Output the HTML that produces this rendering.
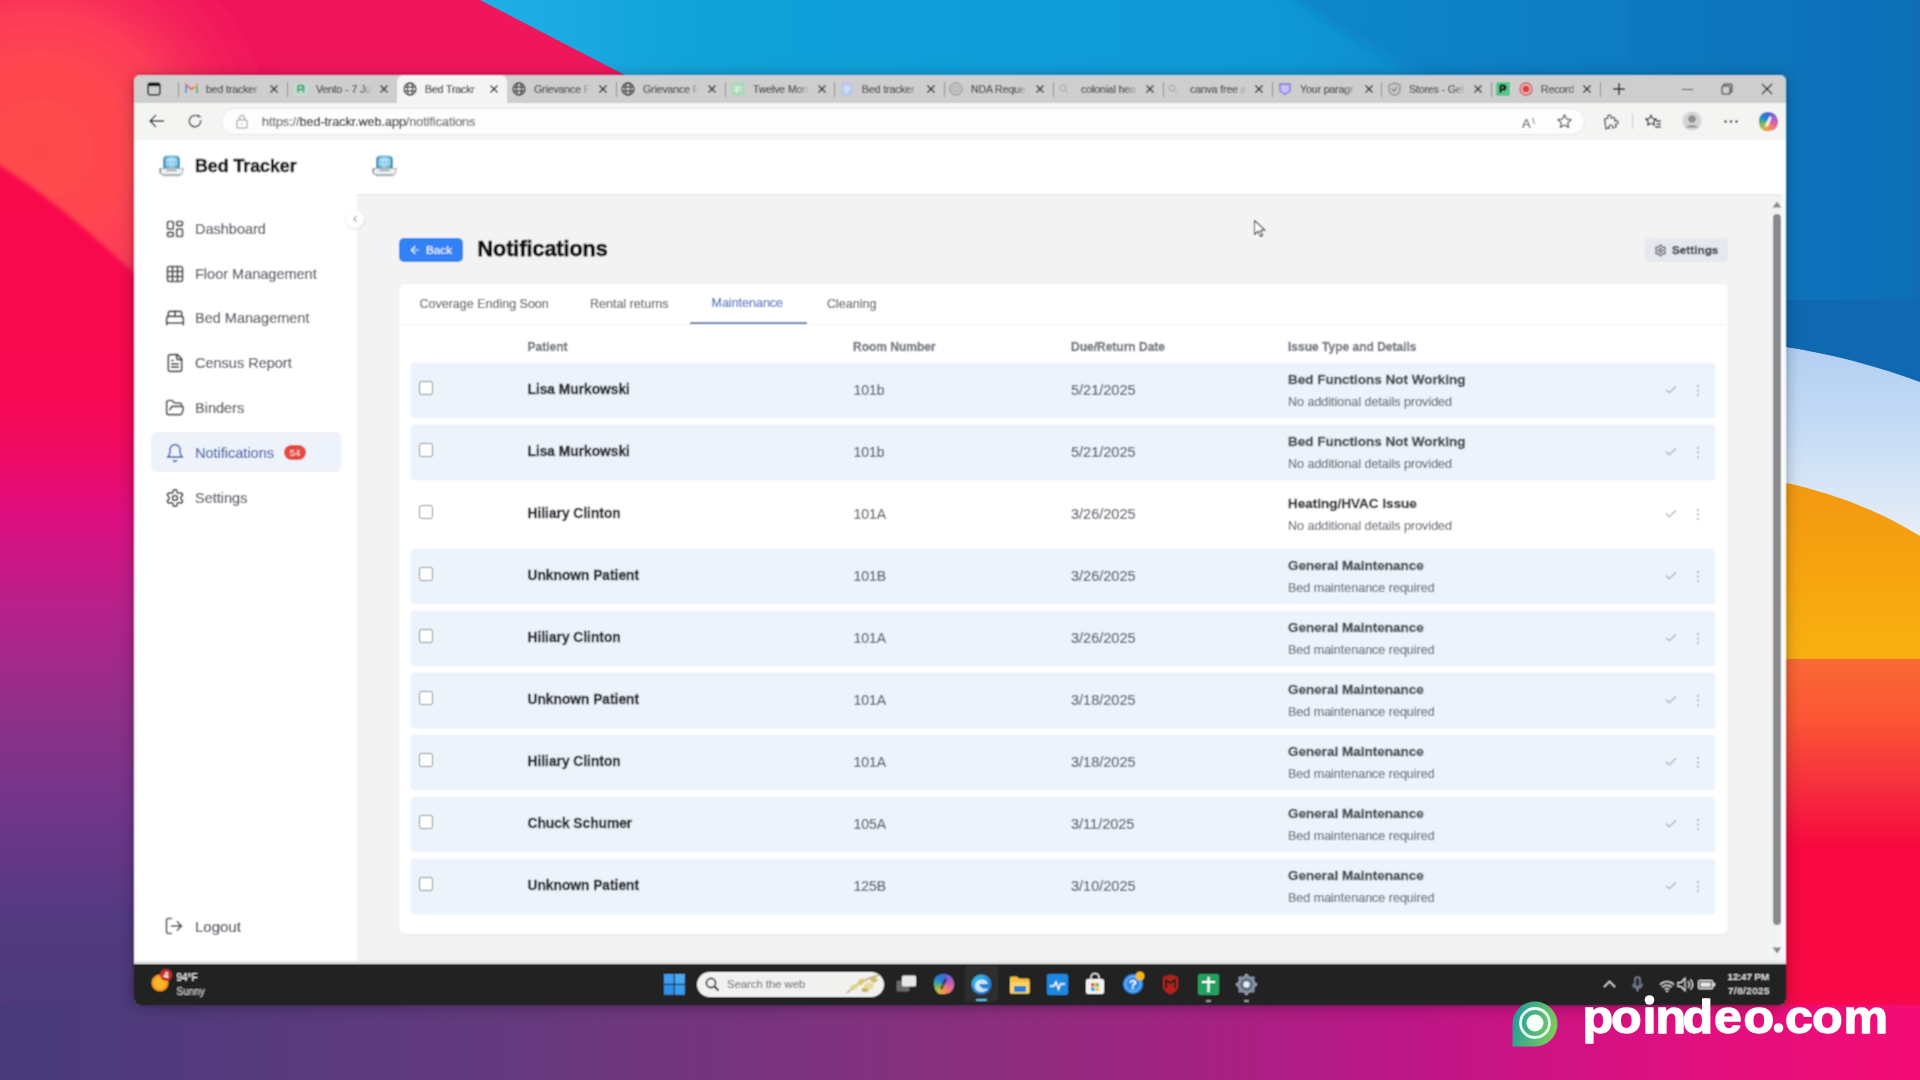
<!DOCTYPE html>
<html><head><meta charset="utf-8">
<style>
*{box-sizing:border-box;margin:0;padding:0}
html,body{width:1920px;height:1080px;overflow:hidden;font-family:"Liberation Sans",sans-serif;background:#6a3a88}
#win{position:absolute;left:134px;top:75px;width:1652px;height:930px;border-radius:6px;overflow:hidden;background:#f3f3f3;box-shadow:0 0 3px rgba(0,0,0,.3),0 2px 16px rgba(0,0,0,.3)}
svg{overflow:visible}
#win{filter:url(#softb)}
</style></head><body>
<svg width="0" height="0" style="position:absolute;left:0;top:0"><filter id="softb" x="-3%" y="-4%" width="106%" height="108%"><feConvolveMatrix order="3" kernelMatrix="1 2 1 2 4 2 1 2 1" divisor="16" edgeMode="none" preserveAlpha="false"/></filter></svg>
<svg id="wall" width="1920" height="1080" viewBox="0 0 1920 1080" style="position:absolute;left:0;top:0">
<defs>
 <linearGradient id="gl" x1="0" y1="0" x2="0" y2="1">
  <stop offset="0" stop-color="#f2185a"/>
  <stop offset="0.16" stop-color="#f80a4c"/>
  <stop offset="0.36" stop-color="#f80850"/>
  <stop offset="0.42" stop-color="#ee0a62"/>
  <stop offset="0.48" stop-color="#dc0e80"/>
  <stop offset="0.56" stop-color="#b8208a"/>
  <stop offset="0.66" stop-color="#8e3088"/>
  <stop offset="0.74" stop-color="#74358a"/>
  <stop offset="0.85" stop-color="#533a80"/>
  <stop offset="1" stop-color="#463a7a"/>
 </linearGradient>
 <linearGradient id="gtop" x1="0" y1="0" x2="1" y2="0">
  <stop offset="0" stop-color="#f4554c"/>
  <stop offset="0.3" stop-color="#f0305a"/>
  <stop offset="1" stop-color="#e0185a"/>
 </linearGradient>
 <linearGradient id="gb" x1="0" y1="0" x2="1" y2="0">
  <stop offset="0" stop-color="#473a7b"/>
  <stop offset="0.26" stop-color="#643a7e"/>
  <stop offset="0.52" stop-color="#8c2e7e"/>
  <stop offset="0.73" stop-color="#bc1686"/>
  <stop offset="0.86" stop-color="#dc1080"/>
  <stop offset="1" stop-color="#f40c74"/>
 </linearGradient>
 <linearGradient id="gblue" x1="0" y1="0" x2="1" y2="0">
  <stop offset="0" stop-color="#22aee6"/>
  <stop offset="0.15" stop-color="#10a2da"/>
  <stop offset="0.55" stop-color="#0e98d6"/>
  <stop offset="1" stop-color="#0f66ae"/>
 </linearGradient>
 <linearGradient id="gr" x1="0" y1="0" x2="0" y2="1">
  <stop offset="0" stop-color="#f86a34"/>
  <stop offset="0.14" stop-color="#fc5634"/>
  <stop offset="0.3" stop-color="#f6303c"/>
  <stop offset="0.45" stop-color="#f80840"/>
  <stop offset="0.78" stop-color="#f80844"/>
  <stop offset="1" stop-color="#f40c74"/>
 </linearGradient>
 <linearGradient id="gor" x1="0" y1="0" x2="0" y2="1">
  <stop offset="0" stop-color="#f09612"/>
  <stop offset="0.5" stop-color="#f7a30f"/>
  <stop offset="1" stop-color="#f8b010"/>
 </linearGradient>
 <linearGradient id="glight" x1="0" y1="0" x2="0" y2="1">
  <stop offset="0" stop-color="#a8c6ee"/>
  <stop offset="0.5" stop-color="#c2daf6"/>
  <stop offset="1" stop-color="#e6eef6"/>
 </linearGradient>
 <linearGradient id="gbv" x1="0" y1="0" x2="0" y2="1">
  <stop offset="0" stop-color="#f0106a" stop-opacity="0"/>
  <stop offset="1" stop-color="#f0106a" stop-opacity="1"/>
 </linearGradient>
 <filter id="bl3" x="-20%" y="-20%" width="140%" height="140%"><feGaussianBlur stdDeviation="5"/></filter>
 <filter id="bl2" x="-50%" y="-50%" width="200%" height="200%"><feGaussianBlur stdDeviation="10"/></filter>
 <filter id="bl" x="-5%" y="-5%" width="110%" height="110%"><feGaussianBlur stdDeviation="2"/></filter>
</defs>
<rect width="1920" height="1080" fill="url(#gl)"/>
<radialGradient id="gcor" gradientUnits="userSpaceOnUse" cx="40" cy="150" r="250">
  <stop offset="0" stop-color="#fe4a4c"/>
  <stop offset="0.35" stop-color="#fe4650"/>
  <stop offset="0.55" stop-color="#fd3c58"/>
  <stop offset="1" stop-color="#f2185a" stop-opacity="0"/>
</radialGradient>
<rect x="0" y="0" width="700" height="75" fill="#f0165c"/>
<path d="M-10 -10 L640 -10 L640 400 L134 273 C95 238 50 195 -10 160 Z" fill="url(#gcor)" filter="url(#bl)"/>
<path d="M560 -10 L640 -10 L640 80 L625 80 Z" fill="#d81550" opacity=".6" filter="url(#bl)"/>
<path d="M1700 658 L1920 658 L1920 1080 L1700 1080Z" fill="url(#gr)"/>
<path d="M0 1005 L1920 1005 L1920 1080 L0 1080Z" fill="url(#gb)"/>
<path d="M1700 466 C1800 474 1870 501 1920 532 L1920 659 L1700 659Z" fill="url(#gor)"/>
<path d="M1700 300 L1920 300 L1920 536 C1870 505 1800 478 1700 470Z" fill="url(#glight)"/>
<path d="M480 0 L1920 0 L1920 382 C1860 360 1780 340 1700 340 L1133 338 Z" fill="url(#gblue)"/>
<linearGradient id="gblue2" gradientUnits="userSpaceOnUse" x1="1270" y1="0" x2="1920" y2="0">
  <stop offset="0" stop-color="#0c88ca"/>
  <stop offset="0.5" stop-color="#0d7cc2"/>
  <stop offset="1" stop-color="#106eb6"/>
</linearGradient>
<path d="M1268 -20 C1320 20 1390 60 1460 100 L1460 338 L1920 338 L1920 -20 Z" fill="url(#gblue2)" filter="url(#bl3)"/>
<path d="M1700 300 L1930 300 L1930 382 C1860 360 1780 340 1700 340 Z" fill="#0f68b0"/>
</svg>
<div id="win">
<div style="position:absolute;left:0px;top:0px;width:1652px;height:28px;background:#cececf"></div>
<div style="position:absolute;left:263px;top:0px;width:110px;height:30px;background:#f4f4f4;border-radius:7px 7px 0 0"></div>
<svg style="position:absolute;left:13px;top:7px;" width="14" height="14" viewBox="0 0 14 14"><rect x="1.2" y="1.2" width="11.6" height="11.6" rx="1.5" fill="none" stroke="#111" stroke-width="1.5"/><rect x="1.2" y="1.2" width="11.6" height="3" fill="#111"/></svg>
<div style="position:absolute;left:44px;top:7px;width:1px;height:15px;background:#8a8a8a"></div>
<div style="position:absolute;left:153px;top:7px;width:1px;height:15px;background:#8a8a8a"></div>
<div style="position:absolute;left:482px;top:7px;width:1px;height:15px;background:#8a8a8a"></div>
<div style="position:absolute;left:591px;top:7px;width:1px;height:15px;background:#8a8a8a"></div>
<div style="position:absolute;left:700px;top:7px;width:1px;height:15px;background:#8a8a8a"></div>
<div style="position:absolute;left:810px;top:7px;width:1px;height:15px;background:#8a8a8a"></div>
<div style="position:absolute;left:919px;top:7px;width:1px;height:15px;background:#8a8a8a"></div>
<div style="position:absolute;left:1029px;top:7px;width:1px;height:15px;background:#8a8a8a"></div>
<div style="position:absolute;left:1138px;top:7px;width:1px;height:15px;background:#8a8a8a"></div>
<div style="position:absolute;left:1247px;top:7px;width:1px;height:15px;background:#8a8a8a"></div>
<div style="position:absolute;left:1357px;top:7px;width:1px;height:15px;background:#8a8a8a"></div>
<div style="position:absolute;left:1466px;top:7px;width:1px;height:15px;background:#8a8a8a"></div>
<svg style="position:absolute;left:51px;top:8px;opacity:.75" width="13" height="11" viewBox="0 0 13 11"><path d="M1 10V2l5.5 4.2L12 2v8" fill="none" stroke="#e0524a" stroke-width="2"/><path d="M1 10V3" stroke="#4a86e8" stroke-width="2"/><path d="M12 10V3" stroke="#3aa757" stroke-width="2"/><path d="M9 3.5 12 2" stroke="#f5bf26" stroke-width="2"/></svg>
<div style="position:absolute;left:72px;top:7.70px;height:12.60px;line-height:12.60px;font-size:10.5px;color:#474747;font-weight:400;white-space:nowrap;-webkit-text-stroke:0.2px #474747;letter-spacing:-0.1px;-webkit-mask-image:linear-gradient(90deg,#000 80%,transparent);mask-image:linear-gradient(90deg,#000 80%,transparent);width:56px;overflow:hidden">bed tracker</div>
<svg style="position:absolute;left:135px;top:9px;" width="10" height="10" viewBox="0 0 10 10"><path d="M1.5 1.5 L8.5 8.5 M8.5 1.5 L1.5 8.5" stroke="#2a2a2a" stroke-width="1.4" fill="none"/></svg>
<svg style="position:absolute;left:161px;top:8px;opacity:.8" width="13" height="12" viewBox="0 0 13 12"><rect x="0" y="0" width="13" height="12" rx="1" fill="#bfe3cf"/><path d="M3 2.5v7M3 2.5h3.5a2 2 0 0 1 0 4H3" fill="none" stroke="#2f9a63" stroke-width="1.8"/><path d="M8.5 2.5v7" stroke="#2f9a63" stroke-width="1.8"/></svg>
<div style="position:absolute;left:182px;top:7.70px;height:12.60px;line-height:12.60px;font-size:10.5px;color:#474747;font-weight:400;white-space:nowrap;-webkit-text-stroke:0.2px #474747;letter-spacing:-0.1px;-webkit-mask-image:linear-gradient(90deg,#000 80%,transparent);mask-image:linear-gradient(90deg,#000 80%,transparent);width:56px;overflow:hidden">Vento - 7 Ju</div>
<svg style="position:absolute;left:245px;top:9px;" width="10" height="10" viewBox="0 0 10 10"><path d="M1.5 1.5 L8.5 8.5 M8.5 1.5 L1.5 8.5" stroke="#2a2a2a" stroke-width="1.4" fill="none"/></svg>
<svg style="position:absolute;left:269px;top:7px;" width="14" height="14" viewBox="0 0 14 14"><g fill="none" stroke="#3a3a3a" stroke-width="1.3"><circle cx="7" cy="7" r="6"/><ellipse cx="7" cy="7" rx="2.6" ry="6"/><path d="M1 5.2h12M1 8.8h12"/></g></svg>
<div style="position:absolute;left:291px;top:7.70px;height:12.60px;line-height:12.60px;font-size:10.5px;color:#2e2e2e;font-weight:400;white-space:nowrap;-webkit-text-stroke:0.2px #2e2e2e;letter-spacing:-0.1px;-webkit-mask-image:linear-gradient(90deg,#000 80%,transparent);mask-image:linear-gradient(90deg,#000 80%,transparent);width:56px;overflow:hidden">Bed Trackr</div>
<svg style="position:absolute;left:355px;top:9px;" width="10" height="10" viewBox="0 0 10 10"><path d="M1.5 1.5 L8.5 8.5 M8.5 1.5 L1.5 8.5" stroke="#2a2a2a" stroke-width="1.4" fill="none"/></svg>
<svg style="position:absolute;left:378px;top:7px;" width="14" height="14" viewBox="0 0 14 14"><g fill="none" stroke="#3a3a3a" stroke-width="1.3"><circle cx="7" cy="7" r="6"/><ellipse cx="7" cy="7" rx="2.6" ry="6"/><path d="M1 5.2h12M1 8.8h12"/></g></svg>
<div style="position:absolute;left:400px;top:7.70px;height:12.60px;line-height:12.60px;font-size:10.5px;color:#474747;font-weight:400;white-space:nowrap;-webkit-text-stroke:0.2px #474747;letter-spacing:-0.1px;-webkit-mask-image:linear-gradient(90deg,#000 80%,transparent);mask-image:linear-gradient(90deg,#000 80%,transparent);width:56px;overflow:hidden">Grievance F</div>
<svg style="position:absolute;left:464px;top:9px;" width="10" height="10" viewBox="0 0 10 10"><path d="M1.5 1.5 L8.5 8.5 M8.5 1.5 L1.5 8.5" stroke="#2a2a2a" stroke-width="1.4" fill="none"/></svg>
<svg style="position:absolute;left:487px;top:7px;" width="14" height="14" viewBox="0 0 14 14"><g fill="none" stroke="#3a3a3a" stroke-width="1.3"><circle cx="7" cy="7" r="6"/><ellipse cx="7" cy="7" rx="2.6" ry="6"/><path d="M1 5.2h12M1 8.8h12"/></g></svg>
<div style="position:absolute;left:509px;top:7.70px;height:12.60px;line-height:12.60px;font-size:10.5px;color:#474747;font-weight:400;white-space:nowrap;-webkit-text-stroke:0.2px #474747;letter-spacing:-0.1px;-webkit-mask-image:linear-gradient(90deg,#000 80%,transparent);mask-image:linear-gradient(90deg,#000 80%,transparent);width:56px;overflow:hidden">Grievance F</div>
<svg style="position:absolute;left:573px;top:9px;" width="10" height="10" viewBox="0 0 10 10"><path d="M1.5 1.5 L8.5 8.5 M8.5 1.5 L1.5 8.5" stroke="#2a2a2a" stroke-width="1.4" fill="none"/></svg>
<svg style="position:absolute;left:597px;top:7px;" width="14" height="14" viewBox="0 0 14 14"><rect x="0.5" y="0.5" width="13" height="13" rx="1" fill="#a8d8b8"/><path d="M3 5h8M3 8h8M6 5v6" stroke="#f0f8f2" stroke-width="1.2"/></svg>
<div style="position:absolute;left:619px;top:7.70px;height:12.60px;line-height:12.60px;font-size:10.5px;color:#474747;font-weight:400;white-space:nowrap;-webkit-text-stroke:0.2px #474747;letter-spacing:-0.1px;-webkit-mask-image:linear-gradient(90deg,#000 80%,transparent);mask-image:linear-gradient(90deg,#000 80%,transparent);width:56px;overflow:hidden">Twelve Mon</div>
<svg style="position:absolute;left:683px;top:9px;" width="10" height="10" viewBox="0 0 10 10"><path d="M1.5 1.5 L8.5 8.5 M8.5 1.5 L1.5 8.5" stroke="#2a2a2a" stroke-width="1.4" fill="none"/></svg>
<svg style="position:absolute;left:707px;top:7px;" width="12" height="14" viewBox="0 0 12 14"><rect x="0.5" y="0.5" width="11" height="13" rx="1" fill="#b8c8f0"/><path d="M3 5h6M3 7.5h6M3 10h4" stroke="#f4f6fc" stroke-width="1.1"/></svg>
<div style="position:absolute;left:728px;top:7.70px;height:12.60px;line-height:12.60px;font-size:10.5px;color:#474747;font-weight:400;white-space:nowrap;-webkit-text-stroke:0.2px #474747;letter-spacing:-0.1px;-webkit-mask-image:linear-gradient(90deg,#000 80%,transparent);mask-image:linear-gradient(90deg,#000 80%,transparent);width:56px;overflow:hidden">Bed tracker</div>
<svg style="position:absolute;left:792px;top:9px;" width="10" height="10" viewBox="0 0 10 10"><path d="M1.5 1.5 L8.5 8.5 M8.5 1.5 L1.5 8.5" stroke="#2a2a2a" stroke-width="1.4" fill="none"/></svg>
<svg style="position:absolute;left:815px;top:7px;" width="14" height="14" viewBox="0 0 14 14"><circle cx="7" cy="7" r="6.2" fill="#c4c4c4" stroke="#8f8f8f" stroke-width="1"/><circle cx="7" cy="7" r="3" fill="none" stroke="#a8a8a8" stroke-width="0.8"/></svg>
<div style="position:absolute;left:837px;top:7.70px;height:12.60px;line-height:12.60px;font-size:10.5px;color:#474747;font-weight:400;white-space:nowrap;-webkit-text-stroke:0.2px #474747;letter-spacing:-0.1px;-webkit-mask-image:linear-gradient(90deg,#000 80%,transparent);mask-image:linear-gradient(90deg,#000 80%,transparent);width:56px;overflow:hidden">NDA Reque</div>
<svg style="position:absolute;left:901px;top:9px;" width="10" height="10" viewBox="0 0 10 10"><path d="M1.5 1.5 L8.5 8.5 M8.5 1.5 L1.5 8.5" stroke="#2a2a2a" stroke-width="1.4" fill="none"/></svg>
<svg style="position:absolute;left:925px;top:9px;" width="10" height="10" viewBox="0 0 10 10"><circle cx="4" cy="4" r="3" fill="none" stroke="#a0a0a0" stroke-width="1"/><path d="M6.3 6.3 9 9" stroke="#a0a0a0" stroke-width="1"/></svg>
<div style="position:absolute;left:947px;top:7.70px;height:12.60px;line-height:12.60px;font-size:10.5px;color:#474747;font-weight:400;white-space:nowrap;-webkit-text-stroke:0.2px #474747;letter-spacing:-0.1px;-webkit-mask-image:linear-gradient(90deg,#000 80%,transparent);mask-image:linear-gradient(90deg,#000 80%,transparent);width:56px;overflow:hidden">colonial hea</div>
<svg style="position:absolute;left:1011px;top:9px;" width="10" height="10" viewBox="0 0 10 10"><path d="M1.5 1.5 L8.5 8.5 M8.5 1.5 L1.5 8.5" stroke="#2a2a2a" stroke-width="1.4" fill="none"/></svg>
<svg style="position:absolute;left:1034px;top:9px;" width="10" height="10" viewBox="0 0 10 10"><circle cx="4" cy="4" r="3" fill="none" stroke="#a0a0a0" stroke-width="1"/><path d="M6.3 6.3 9 9" stroke="#a0a0a0" stroke-width="1"/></svg>
<div style="position:absolute;left:1056px;top:7.70px;height:12.60px;line-height:12.60px;font-size:10.5px;color:#474747;font-weight:400;white-space:nowrap;-webkit-text-stroke:0.2px #474747;letter-spacing:-0.1px;-webkit-mask-image:linear-gradient(90deg,#000 80%,transparent);mask-image:linear-gradient(90deg,#000 80%,transparent);width:56px;overflow:hidden">canva free a</div>
<svg style="position:absolute;left:1120px;top:9px;" width="10" height="10" viewBox="0 0 10 10"><path d="M1.5 1.5 L8.5 8.5 M8.5 1.5 L1.5 8.5" stroke="#2a2a2a" stroke-width="1.4" fill="none"/></svg>
<svg style="position:absolute;left:1144px;top:7px;" width="14" height="14" viewBox="0 0 14 14"><path d="M2 2h10v7l-5 3.5L2 9z" fill="#c8c0f4" stroke="#6a78d8" stroke-width="1.3"/></svg>
<div style="position:absolute;left:1166px;top:7.70px;height:12.60px;line-height:12.60px;font-size:10.5px;color:#474747;font-weight:400;white-space:nowrap;-webkit-text-stroke:0.2px #474747;letter-spacing:-0.1px;-webkit-mask-image:linear-gradient(90deg,#000 80%,transparent);mask-image:linear-gradient(90deg,#000 80%,transparent);width:56px;overflow:hidden">Your paragr</div>
<svg style="position:absolute;left:1230px;top:9px;" width="10" height="10" viewBox="0 0 10 10"><path d="M1.5 1.5 L8.5 8.5 M8.5 1.5 L1.5 8.5" stroke="#2a2a2a" stroke-width="1.4" fill="none"/></svg>
<svg style="position:absolute;left:1253px;top:7px;" width="15" height="14" viewBox="0 0 15 14"><path d="M2 3l5.5-2 5.5 2v4.5c0 3-2.5 5-5.5 6-3-1-5.5-3-5.5-6z" fill="#c8c8c8" stroke="#8a8a8a" stroke-width="1.2"/><path d="M5 7l2 2 3-4" stroke="#777" stroke-width="1.2" fill="none"/></svg>
<div style="position:absolute;left:1275px;top:7.70px;height:12.60px;line-height:12.60px;font-size:10.5px;color:#474747;font-weight:400;white-space:nowrap;-webkit-text-stroke:0.2px #474747;letter-spacing:-0.1px;-webkit-mask-image:linear-gradient(90deg,#000 80%,transparent);mask-image:linear-gradient(90deg,#000 80%,transparent);width:56px;overflow:hidden">Stores - Get</div>
<svg style="position:absolute;left:1339px;top:9px;" width="10" height="10" viewBox="0 0 10 10"><path d="M1.5 1.5 L8.5 8.5 M8.5 1.5 L1.5 8.5" stroke="#2a2a2a" stroke-width="1.4" fill="none"/></svg>
<svg style="position:absolute;left:1362px;top:7px;" width="14" height="14" viewBox="0 0 14 14"><rect x="0" y="0" width="14" height="14" rx="1.5" fill="#58c888"/><path d="M4.5 3v8M4.5 3.5h3a2 2 0 0 1 0 4h-3M8.5 3.5v5" stroke="#111" stroke-width="2" fill="none"/></svg>
<svg style="position:absolute;left:1385px;top:7px;" width="14" height="14" viewBox="0 0 14 14"><circle cx="7" cy="7" r="6" fill="none" stroke="#e04040" stroke-width="1.3"/><circle cx="7" cy="7" r="3.6" fill="#e83a3a"/></svg>
<div style="position:absolute;left:1407px;top:7.70px;height:12.60px;line-height:12.60px;font-size:10.5px;color:#474747;font-weight:400;white-space:nowrap;-webkit-text-stroke:0.2px #474747;letter-spacing:-0.1px;-webkit-mask-image:linear-gradient(90deg,#000 80%,transparent);mask-image:linear-gradient(90deg,#000 80%,transparent);width:36px;overflow:hidden">Record</div>
<svg style="position:absolute;left:1448px;top:9px;" width="10" height="10" viewBox="0 0 10 10"><path d="M1.5 1.5 L8.5 8.5 M8.5 1.5 L1.5 8.5" stroke="#2a2a2a" stroke-width="1.4" fill="none"/></svg>
<svg style="position:absolute;left:1478px;top:7px;" width="14" height="14" viewBox="0 0 14 14"><path d="M7 1v12M1 7h12" stroke="#222" stroke-width="1.5"/></svg>
<div style="position:absolute;left:1548px;top:14px;width:11px;height:1px;background:#222"></div>
<svg style="position:absolute;left:1587px;top:8px;" width="12" height="12" viewBox="0 0 12 12"><rect x="1" y="3" width="8" height="8" rx="1" fill="none" stroke="#333" stroke-width="1.1"/><path d="M3 3V1.5a.5.5 0 0 1 .5-.5H10a1 1 0 0 1 1 1v6.5a.5.5 0 0 1-.5.5H9" fill="none" stroke="#333" stroke-width="1.1"/></svg>
<svg style="position:absolute;left:1627px;top:8px;" width="12" height="12" viewBox="0 0 12 12"><path d="M1 1 11 11M11 1 1 11" stroke="#222" stroke-width="1.2"/></svg>
<div style="position:absolute;left:0px;top:28px;width:1652px;height:37px;background:#f4f4f3"></div>
<svg style="position:absolute;left:14px;top:38px;" width="18" height="16" viewBox="0 0 18 16"><path d="M16 8H2M8 2 2 8l6 6" fill="none" stroke="#333" stroke-width="1.4"/></svg>
<svg style="position:absolute;left:53px;top:38px;" width="16" height="16" viewBox="0 0 16 16"><path d="M13.6 7.2A5.7 5.7 0 1 1 11.2 3.4" fill="none" stroke="#333" stroke-width="1.4"/><path d="M11.5 1.2v2.6h2.6" fill="none" stroke="#333" stroke-width="1.1"/></svg>
<div style="position:absolute;left:87px;top:33px;width:1364px;height:27px;background:#fdfdfd;border:1px solid #e6e6e6;border-radius:14px"></div>
<svg style="position:absolute;left:101px;top:39px;" width="14" height="15" viewBox="0 0 14 15"><rect x="2" y="6" width="10" height="8" rx="1" fill="none" stroke="#9a9a9a" stroke-width="1.1"/><path d="M4.5 6V4a2.5 2.5 0 0 1 5 0v2" fill="none" stroke="#9a9a9a" stroke-width="1.1"/><circle cx="7" cy="10" r="0.8" fill="#9a9a9a"/></svg>
<div style="position:absolute;left:128px;top:40.00px;height:15.00px;line-height:15.00px;font-size:12.5px;color:#222;font-weight:400;white-space:nowrap;-webkit-text-stroke:0.2px #222;letter-spacing:0px"><span style="color:#8a8a8a">https://</span><span style="color:#222">bed-trackr.web.app</span><span style="color:#8a8a8a">/notifications</span></div>
<div style="position:absolute;left:1388px;top:38.20px;height:15.60px;line-height:15.60px;font-size:13px;color:#555;font-weight:400;white-space:nowrap;-webkit-text-stroke:0.2px #555;">A<sup style="font-size:7px">&#8726;</sup></div>
<svg style="position:absolute;left:1422px;top:38px;" width="17" height="17" viewBox="0 0 17 17"><path d="M8.5 1.8l2 4.3 4.7.5-3.5 3.2 1 4.6-4.2-2.4-4.2 2.4 1-4.6L1.8 6.6l4.7-.5z" fill="none" stroke="#444" stroke-width="1.2" stroke-linejoin="round"/></svg>
<svg style="position:absolute;left:1468px;top:38px;transform:rotate(-8deg)" width="17" height="17" viewBox="0 0 17 17"><path d="M3 5h3.2a2 2 0 1 1 3.6 0H13v3.5a2 2 0 1 1 0 3.6V15H9.8a2 2 0 1 0-3.6 0H3z" fill="none" stroke="#444" stroke-width="1.3"/></svg>
<div style="position:absolute;left:1498px;top:39px;width:1px;height:15px;background:#c8c8c8"></div>
<svg style="position:absolute;left:1510px;top:38px;" width="18" height="17" viewBox="0 0 18 17"><path d="M7 2l1.6 3.5 3.8.4-2.8 2.6.8 3.7L7 10.3l-3.4 1.9.8-3.7L1.6 5.9l3.8-.4z" fill="none" stroke="#333" stroke-width="1.3" stroke-linejoin="round"/><path d="M12 8h5M12.5 11h4.5M11 14h6" stroke="#333" stroke-width="1.3"/></svg>
<svg style="position:absolute;left:1548px;top:36px;" width="20" height="20" viewBox="0 0 20 20"><circle cx="10" cy="10" r="9.5" fill="#d4d4d4"/><circle cx="10" cy="8" r="3.8" fill="#8f8f8f"/><path d="M3.5 16.5a7.5 5 0 0 1 13 0" fill="#8f8f8f"/></svg>
<svg style="position:absolute;left:1589px;top:44px;" width="16" height="5" viewBox="0 0 16 5"><circle cx="2.5" cy="2.5" r="1.3" fill="#333"/><circle cx="8" cy="2.5" r="1.3" fill="#333"/><circle cx="13.5" cy="2.5" r="1.3" fill="#333"/></svg>
<div style="position:absolute;left:1625px;top:37px;width:19px;height:19px;border-radius:42% 48% 45% 40%;background:conic-gradient(from 0deg,#3a6ad8,#9a5ad0 15%,#e06a9a 35%,#f58a5a 50%,#d8b840 62%,#5ab078 75%,#1a8ad4 88%,#3a6ad8);transform:rotate(-8deg)"></div>
<div style="position:absolute;left:1633px;top:41px;width:3px;height:11px;background:rgba(255,255,255,.85);border-radius:2px;transform:rotate(25deg)"></div>
<div style="position:absolute;left:0px;top:65px;width:1652px;height:822px;background:#f3f3f3"></div>
<div style="position:absolute;left:0px;top:65px;width:1652px;height:54px;background:#ffffff"></div>
<div style="position:absolute;left:223px;top:118.5px;width:1429px;height:1px;background:#e4e5e8"></div>
<div style="position:absolute;left:0px;top:65px;width:223px;height:822px;background:#ffffff"></div>
<svg style="position:absolute;left:24px;top:78px;" width="27" height="24" viewBox="0 0 27 24"><defs><linearGradient id="lgh159" x1="0" y1="0" x2="1" y2="0"><stop offset="0" stop-color="#3a92b4"/><stop offset="0.5" stop-color="#8ed2ee"/><stop offset="1" stop-color="#3a92b4"/></linearGradient></defs>
<path d="M5 15V6.5C5 4 7 2.5 9.5 2.5h8C20 2.5 22 4 22 6.5V15z" fill="url(#lgh159)"/>
<path d="M12.5 2.2h2v1h-2z" fill="#9ab8cc"/>
<rect x="8" y="5.5" width="11" height="7" rx="1" fill="#c4ecfc" opacity=".8"/>
<path d="M10 11.5v-4M13.5 11.5v-4M17 11.5v-4" stroke="#6aaed0" stroke-width="1.2" fill="none"/>
<path d="M1.5 15.5h24l-1.5 6H3z" fill="#eef0f2" stroke="#9aa0a6" stroke-width="0.9"/>
<rect x="1.5" y="15.5" width="1.6" height="5" fill="#8a8e94"/>
<rect x="8.5" y="16.5" width="10" height="1.8" fill="#a4a8ae"/>
<path d="M4.5 22.8h18" stroke="#9aa0a6" stroke-width="1"/></svg>
<div style="position:absolute;left:61px;top:80.85px;height:21.30px;line-height:21.30px;font-size:17.75px;color:#1a1a1a;font-weight:700;white-space:nowrap;-webkit-text-stroke:0.35px #1a1a1a;letter-spacing:0px;-webkit-text-stroke:0.6px #1a1a1a">Bed Tracker</div>
<svg style="position:absolute;left:237px;top:78px;" width="27" height="24" viewBox="0 0 27 24"><defs><linearGradient id="lgh372" x1="0" y1="0" x2="1" y2="0"><stop offset="0" stop-color="#3a92b4"/><stop offset="0.5" stop-color="#8ed2ee"/><stop offset="1" stop-color="#3a92b4"/></linearGradient></defs>
<path d="M5 15V6.5C5 4 7 2.5 9.5 2.5h8C20 2.5 22 4 22 6.5V15z" fill="url(#lgh372)"/>
<path d="M12.5 2.2h2v1h-2z" fill="#9ab8cc"/>
<rect x="8" y="5.5" width="11" height="7" rx="1" fill="#c4ecfc" opacity=".8"/>
<path d="M10 11.5v-4M13.5 11.5v-4M17 11.5v-4" stroke="#6aaed0" stroke-width="1.2" fill="none"/>
<path d="M1.5 15.5h24l-1.5 6H3z" fill="#eef0f2" stroke="#9aa0a6" stroke-width="0.9"/>
<rect x="1.5" y="15.5" width="1.6" height="5" fill="#8a8e94"/>
<rect x="8.5" y="16.5" width="10" height="1.8" fill="#a4a8ae"/>
<path d="M4.5 22.8h18" stroke="#9aa0a6" stroke-width="1"/></svg>
<div style="position:absolute;left:17px;top:357px;width:190px;height:40px;background:#eef3fb;border-radius:6px"></div>
<svg style="position:absolute;left:30.5px;top:143.5px;" width="20" height="20" viewBox="0 0 24 24"><g fill="none" stroke="#3a3f46" stroke-width="2" stroke-linecap="round" stroke-linejoin="round"><rect width="7" height="9" x="3" y="3" rx="1"/><rect width="7" height="5" x="14" y="3" rx="1"/><rect width="7" height="9" x="14" y="12" rx="1"/><rect width="7" height="5" x="3" y="16" rx="1"/></g></svg>
<div style="position:absolute;left:61px;top:145.50px;height:17.40px;line-height:17.40px;font-size:14.5px;color:#4f545c;font-weight:400;white-space:nowrap;-webkit-text-stroke:0.2px #4f545c;">Dashboard</div>
<svg style="position:absolute;left:30.5px;top:188.5px;" width="20" height="20" viewBox="0 0 24 24"><g fill="none" stroke="#3a3f46" stroke-width="2" stroke-linecap="round" stroke-linejoin="round"><rect width="18" height="18" x="3" y="3" rx="2"/><path d="M3 9h18"/><path d="M3 15h18"/><path d="M9 3v18"/><path d="M15 3v18"/></g></svg>
<div style="position:absolute;left:61px;top:190.50px;height:17.40px;line-height:17.40px;font-size:14.5px;color:#4f545c;font-weight:400;white-space:nowrap;-webkit-text-stroke:0.2px #4f545c;">Floor Management</div>
<svg style="position:absolute;left:30.5px;top:233.0px;" width="20" height="20" viewBox="0 0 24 24"><g fill="none" stroke="#3a3f46" stroke-width="2" stroke-linecap="round" stroke-linejoin="round"><path d="M2 20v-8a2 2 0 0 1 2-2h16a2 2 0 0 1 2 2v8"/><path d="M4 10V6a2 2 0 0 1 2-2h12a2 2 0 0 1 2 2v4"/><path d="M12 4v6"/><path d="M2 18h20"/></g></svg>
<div style="position:absolute;left:61px;top:235.00px;height:17.40px;line-height:17.40px;font-size:14.5px;color:#4f545c;font-weight:400;white-space:nowrap;-webkit-text-stroke:0.2px #4f545c;">Bed Management</div>
<svg style="position:absolute;left:30.5px;top:277.5px;" width="20" height="20" viewBox="0 0 24 24"><g fill="none" stroke="#3a3f46" stroke-width="2" stroke-linecap="round" stroke-linejoin="round"><path d="M15 2H6a2 2 0 0 0-2 2v16a2 2 0 0 0 2 2h12a2 2 0 0 0 2-2V7Z"/><path d="M14 2v4a2 2 0 0 0 2 2h4"/><path d="M10 9H8"/><path d="M16 13H8"/><path d="M16 17H8"/></g></svg>
<div style="position:absolute;left:61px;top:279.50px;height:17.40px;line-height:17.40px;font-size:14.5px;color:#4f545c;font-weight:400;white-space:nowrap;-webkit-text-stroke:0.2px #4f545c;">Census Report</div>
<svg style="position:absolute;left:30.5px;top:322.5px;" width="20" height="20" viewBox="0 0 24 24"><g fill="none" stroke="#3a3f46" stroke-width="2" stroke-linecap="round" stroke-linejoin="round"><path d="m6 14 1.5-2.9A2 2 0 0 1 9.24 10H20a2 2 0 0 1 1.94 2.5l-1.54 6a2 2 0 0 1-1.95 1.5H4a2 2 0 0 1-2-2V5a2 2 0 0 1 2-2h3.9a2 2 0 0 1 1.69.9l.81 1.2a2 2 0 0 0 1.67.9H18a2 2 0 0 1 2 2v2"/></g></svg>
<div style="position:absolute;left:61px;top:324.50px;height:17.40px;line-height:17.40px;font-size:14.5px;color:#4f545c;font-weight:400;white-space:nowrap;-webkit-text-stroke:0.2px #4f545c;">Binders</div>
<svg style="position:absolute;left:30.5px;top:367.5px;" width="20" height="20" viewBox="0 0 24 24"><g fill="none" stroke="#4f6db0" stroke-width="2" stroke-linecap="round" stroke-linejoin="round"><path d="M6 8a6 6 0 0 1 12 0c0 7 3 9 3 9H3s3-2 3-9"/><path d="M10.3 21a1.94 1.94 0 0 0 3.4 0"/></g></svg>
<div style="position:absolute;left:61px;top:369.50px;height:17.40px;line-height:17.40px;font-size:14.5px;color:#4a65a8;font-weight:400;white-space:nowrap;-webkit-text-stroke:0.2px #4a65a8;">Notifications</div>
<svg style="position:absolute;left:30.5px;top:412.5px;" width="20" height="20" viewBox="0 0 24 24"><g fill="none" stroke="#3a3f46" stroke-width="2" stroke-linecap="round" stroke-linejoin="round"><path d="M12.22 2h-.44a2 2 0 0 0-2 2v.18a2 2 0 0 1-1 1.73l-.43.25a2 2 0 0 1-2 0l-.15-.08a2 2 0 0 0-2.73.73l-.22.38a2 2 0 0 0 .73 2.73l.15.1a2 2 0 0 1 1 1.72v.51a2 2 0 0 1-1 1.74l-.15.09a2 2 0 0 0-.73 2.73l.22.38a2 2 0 0 0 2.73.73l.15-.08a2 2 0 0 1 2 0l.43.25a2 2 0 0 1 1 1.73V20a2 2 0 0 0 2 2h.44a2 2 0 0 0 2-2v-.18a2 2 0 0 1 1-1.73l.43-.25a2 2 0 0 1 2 0l.15.08a2 2 0 0 0 2.73-.73l.22-.39a2 2 0 0 0-.73-2.73l-.15-.08a2 2 0 0 1-1-1.74v-.5a2 2 0 0 1 1-1.74l.15-.09a2 2 0 0 0 .73-2.73l-.22-.38a2 2 0 0 0-2.73-.73l-.15.08a2 2 0 0 1-2 0l-.43-.25a2 2 0 0 1-1-1.73V4a2 2 0 0 0-2-2z"/><circle cx="12" cy="12" r="3"/></g></svg>
<div style="position:absolute;left:61px;top:414.50px;height:17.40px;line-height:17.40px;font-size:14.5px;color:#4f545c;font-weight:400;white-space:nowrap;-webkit-text-stroke:0.2px #4f545c;">Settings</div>
<div style="position:absolute;left:150px;top:370px;width:22px;height:15px;background:#e5483f;border-radius:8px;color:#fde8e6;font-size:9.5px;line-height:15px;text-align:center;font-weight:400">54</div>
<svg style="position:absolute;left:30px;top:841px;" width="20" height="20" viewBox="0 0 24 24"><g fill="none" stroke="#3f4550" stroke-width="1.9" stroke-linecap="round" stroke-linejoin="round"><path d="M9 21H5a2 2 0 0 1-2-2V5a2 2 0 0 1 2-2h4"/><polyline points="16 17 21 12 16 7"/><line x1="21" x2="9" y1="12" y2="12"/></g></svg>
<div style="position:absolute;left:61px;top:842.50px;height:18.00px;line-height:18.00px;font-size:15px;color:#3f4550;font-weight:400;white-space:nowrap;-webkit-text-stroke:0.2px #3f4550;">Logout</div>
<div style="position:absolute;left:212px;top:135px;width:18px;height:18px;background:#fff;border-radius:50%;box-shadow:0 1px 3px rgba(0,0,0,.12)"></div>
<svg style="position:absolute;left:216px;top:139px;" width="10" height="10" viewBox="0 0 24 24"><g fill="none" stroke="#555" stroke-width="2.4" stroke-linecap="round" stroke-linejoin="round"><path d="m15 18-6-6 6-6"/></g></svg>
<div style="position:absolute;left:265px;top:163px;width:64px;height:24px;background:#3182f6;border-radius:5px"></div>
<svg style="position:absolute;left:275px;top:169px;" width="12" height="12" viewBox="0 0 24 24"><g fill="none" stroke="#e8f2ff" stroke-width="2.4" stroke-linecap="round" stroke-linejoin="round"><path d="m12 19-7-7 7-7"/><path d="M19 12H5"/></g></svg>
<div style="position:absolute;left:292px;top:167.95px;height:14.10px;line-height:14.10px;font-size:11.75px;color:#eaf3ff;font-weight:400;white-space:nowrap;-webkit-text-stroke:0.2px #eaf3ff;">Back</div>
<div style="position:absolute;left:343.5px;top:161.60px;height:25.80px;line-height:25.80px;font-size:21.5px;color:#111111;font-weight:700;white-space:nowrap;-webkit-text-stroke:0.35px #111111;-webkit-text-stroke:0.75px #111">Notifications</div>
<div style="position:absolute;left:1511px;top:163px;width:83px;height:24px;background:#e5e8ee;border-radius:4px"></div>
<svg style="position:absolute;left:1520px;top:169px;" width="13" height="13" viewBox="0 0 24 24"><g fill="none" stroke="#4b515b" stroke-width="2.2" stroke-linecap="round" stroke-linejoin="round"><path d="M12.22 2h-.44a2 2 0 0 0-2 2v.18a2 2 0 0 1-1 1.73l-.43.25a2 2 0 0 1-2 0l-.15-.08a2 2 0 0 0-2.73.73l-.22.38a2 2 0 0 0 .73 2.73l.15.1a2 2 0 0 1 1 1.72v.51a2 2 0 0 1-1 1.74l-.15.09a2 2 0 0 0-.73 2.73l.22.38a2 2 0 0 0 2.73.73l.15-.08a2 2 0 0 1 2 0l.43.25a2 2 0 0 1 1 1.73V20a2 2 0 0 0 2 2h.44a2 2 0 0 0 2-2v-.18a2 2 0 0 1 1-1.73l.43-.25a2 2 0 0 1 2 0l.15.08a2 2 0 0 0 2.73-.73l.22-.39a2 2 0 0 0-.73-2.73l-.15-.08a2 2 0 0 1-1-1.74v-.5a2 2 0 0 1 1-1.74l.15-.09a2 2 0 0 0 .73-2.73l-.22-.38a2 2 0 0 0-2.73-.73l-.15.08a2 2 0 0 1-2 0l-.43-.25a2 2 0 0 1-1-1.73V4a2 2 0 0 0-2-2z"/><circle cx="12" cy="12" r="3"/></g></svg>
<div style="position:absolute;left:1538px;top:167.95px;height:14.10px;line-height:14.10px;font-size:11.75px;color:#41464d;font-weight:700;white-space:nowrap;-webkit-text-stroke:0.35px #41464d;">Settings</div>
<div style="position:absolute;left:265px;top:209px;width:1329px;height:650px;background:#ffffff;border-radius:6px;box-shadow:0 1px 3px rgba(0,0,0,.06)"></div>
<div style="position:absolute;left:265px;top:249px;width:1329px;height:1px;background:#eceef1"></div>
<div style="position:absolute;left:285.5px;top:221.50px;height:15.00px;line-height:15.00px;font-size:12.5px;color:#5a5f68;font-weight:400;white-space:nowrap;-webkit-text-stroke:0.2px #5a5f68;">Coverage Ending Soon</div>
<div style="position:absolute;left:456px;top:221.50px;height:15.00px;line-height:15.00px;font-size:12.5px;color:#5a5f68;font-weight:400;white-space:nowrap;-webkit-text-stroke:0.2px #5a5f68;">Rental returns</div>
<div style="position:absolute;left:577.5px;top:220.50px;height:15.00px;line-height:15.00px;font-size:12.5px;color:#4a72c0;font-weight:400;white-space:nowrap;-webkit-text-stroke:0.2px #4a72c0;">Maintenance</div>
<div style="position:absolute;left:693px;top:221.50px;height:15.00px;line-height:15.00px;font-size:12.5px;color:#5a5f68;font-weight:400;white-space:nowrap;-webkit-text-stroke:0.2px #5a5f68;">Cleaning</div>
<div style="position:absolute;left:556px;top:247px;width:117px;height:2px;background:#5d7cae"></div>
<div style="position:absolute;left:393.5px;top:264.80px;height:14.40px;line-height:14.40px;font-size:12px;color:#767a82;font-weight:700;white-space:nowrap;-webkit-text-stroke:0.35px #767a82;">Patient</div>
<div style="position:absolute;left:719px;top:264.80px;height:14.40px;line-height:14.40px;font-size:12px;color:#767a82;font-weight:700;white-space:nowrap;-webkit-text-stroke:0.35px #767a82;">Room Number</div>
<div style="position:absolute;left:937px;top:264.80px;height:14.40px;line-height:14.40px;font-size:12px;color:#767a82;font-weight:700;white-space:nowrap;-webkit-text-stroke:0.35px #767a82;">Due/Return Date</div>
<div style="position:absolute;left:1154px;top:264.80px;height:14.40px;line-height:14.40px;font-size:12px;color:#767a82;font-weight:700;white-space:nowrap;-webkit-text-stroke:0.35px #767a82;">Issue Type and Details</div>
<div style="position:absolute;left:277px;top:288px;width:1304px;height:55px;background:#ecf3fb;border-radius:4px;box-shadow:0 0 3px #eef4fb"></div>
<div style="position:absolute;left:285px;top:306px;width:14px;height:14px;background:#fff;border:1.3px solid #7a7e86;border-radius:2.5px"></div>
<div style="position:absolute;left:393.5px;top:307.25px;height:16.50px;line-height:16.50px;font-size:13.75px;color:#22252b;font-weight:700;white-space:nowrap;-webkit-text-stroke:0.35px #22252b;">Lisa Murkowski</div>
<div style="position:absolute;left:719.5px;top:307.10px;height:16.80px;line-height:16.80px;font-size:14px;color:#5a5f68;font-weight:400;white-space:nowrap;-webkit-text-stroke:0.2px #5a5f68;">101b</div>
<div style="position:absolute;left:937px;top:306.80px;height:17.40px;line-height:17.40px;font-size:14.5px;color:#5a5f68;font-weight:400;white-space:nowrap;-webkit-text-stroke:0.2px #5a5f68;">5/21/2025</div>
<div style="position:absolute;left:1154px;top:296.90px;height:16.20px;line-height:16.20px;font-size:13.5px;color:#484c54;font-weight:700;white-space:nowrap;-webkit-text-stroke:0.35px #484c54;">Bed Functions Not Working</div>
<div style="position:absolute;left:1154px;top:320.00px;height:15.00px;line-height:15.00px;font-size:12.5px;color:#6a6e76;font-weight:400;white-space:nowrap;-webkit-text-stroke:0.2px #6a6e76;">No additional details provided</div>
<svg style="position:absolute;left:1530px;top:308px;" width="14" height="14" viewBox="0 0 24 24"><g fill="none" stroke="#a8acb2" stroke-width="2" stroke-linecap="round" stroke-linejoin="round"><path d="M20 6 9 17l-5-5"/></g></svg>
<svg style="position:absolute;left:1562px;top:309px;" width="4" height="13" viewBox="0 0 4 13"><circle cx="2" cy="2" r="1.1" fill="#a4a8ae"/><circle cx="2" cy="6.5" r="1.1" fill="#a4a8ae"/><circle cx="2" cy="11" r="1.1" fill="#a4a8ae"/></svg>
<div style="position:absolute;left:277px;top:350px;width:1304px;height:55px;background:#ecf3fb;border-radius:4px;box-shadow:0 0 3px #eef4fb"></div>
<div style="position:absolute;left:285px;top:368px;width:14px;height:14px;background:#fff;border:1.3px solid #7a7e86;border-radius:2.5px"></div>
<div style="position:absolute;left:393.5px;top:369.25px;height:16.50px;line-height:16.50px;font-size:13.75px;color:#22252b;font-weight:700;white-space:nowrap;-webkit-text-stroke:0.35px #22252b;">Lisa Murkowski</div>
<div style="position:absolute;left:719.5px;top:369.10px;height:16.80px;line-height:16.80px;font-size:14px;color:#5a5f68;font-weight:400;white-space:nowrap;-webkit-text-stroke:0.2px #5a5f68;">101b</div>
<div style="position:absolute;left:937px;top:368.80px;height:17.40px;line-height:17.40px;font-size:14.5px;color:#5a5f68;font-weight:400;white-space:nowrap;-webkit-text-stroke:0.2px #5a5f68;">5/21/2025</div>
<div style="position:absolute;left:1154px;top:358.90px;height:16.20px;line-height:16.20px;font-size:13.5px;color:#484c54;font-weight:700;white-space:nowrap;-webkit-text-stroke:0.35px #484c54;">Bed Functions Not Working</div>
<div style="position:absolute;left:1154px;top:382.00px;height:15.00px;line-height:15.00px;font-size:12.5px;color:#6a6e76;font-weight:400;white-space:nowrap;-webkit-text-stroke:0.2px #6a6e76;">No additional details provided</div>
<svg style="position:absolute;left:1530px;top:370px;" width="14" height="14" viewBox="0 0 24 24"><g fill="none" stroke="#a8acb2" stroke-width="2" stroke-linecap="round" stroke-linejoin="round"><path d="M20 6 9 17l-5-5"/></g></svg>
<svg style="position:absolute;left:1562px;top:371px;" width="4" height="13" viewBox="0 0 4 13"><circle cx="2" cy="2" r="1.1" fill="#a4a8ae"/><circle cx="2" cy="6.5" r="1.1" fill="#a4a8ae"/><circle cx="2" cy="11" r="1.1" fill="#a4a8ae"/></svg>
<div style="position:absolute;left:285px;top:430px;width:14px;height:14px;background:#fff;border:1.3px solid #7a7e86;border-radius:2.5px"></div>
<div style="position:absolute;left:393.5px;top:431.25px;height:16.50px;line-height:16.50px;font-size:13.75px;color:#22252b;font-weight:700;white-space:nowrap;-webkit-text-stroke:0.35px #22252b;">Hiliary Clinton</div>
<div style="position:absolute;left:719.5px;top:431.10px;height:16.80px;line-height:16.80px;font-size:14px;color:#5a5f68;font-weight:400;white-space:nowrap;-webkit-text-stroke:0.2px #5a5f68;">101A</div>
<div style="position:absolute;left:937px;top:430.80px;height:17.40px;line-height:17.40px;font-size:14.5px;color:#5a5f68;font-weight:400;white-space:nowrap;-webkit-text-stroke:0.2px #5a5f68;">3/26/2025</div>
<div style="position:absolute;left:1154px;top:420.90px;height:16.20px;line-height:16.20px;font-size:13.5px;color:#2f3338;font-weight:700;white-space:nowrap;-webkit-text-stroke:0.35px #2f3338;">Heating/HVAC Issue</div>
<div style="position:absolute;left:1154px;top:444.00px;height:15.00px;line-height:15.00px;font-size:12.5px;color:#6a6e76;font-weight:400;white-space:nowrap;-webkit-text-stroke:0.2px #6a6e76;">No additional details provided</div>
<svg style="position:absolute;left:1530px;top:432px;" width="14" height="14" viewBox="0 0 24 24"><g fill="none" stroke="#a8acb2" stroke-width="2" stroke-linecap="round" stroke-linejoin="round"><path d="M20 6 9 17l-5-5"/></g></svg>
<svg style="position:absolute;left:1562px;top:433px;" width="4" height="13" viewBox="0 0 4 13"><circle cx="2" cy="2" r="1.1" fill="#a4a8ae"/><circle cx="2" cy="6.5" r="1.1" fill="#a4a8ae"/><circle cx="2" cy="11" r="1.1" fill="#a4a8ae"/></svg>
<div style="position:absolute;left:277px;top:474px;width:1304px;height:55px;background:#ecf3fb;border-radius:4px;box-shadow:0 0 3px #eef4fb"></div>
<div style="position:absolute;left:285px;top:492px;width:14px;height:14px;background:#fff;border:1.3px solid #7a7e86;border-radius:2.5px"></div>
<div style="position:absolute;left:393.5px;top:493.25px;height:16.50px;line-height:16.50px;font-size:13.75px;color:#22252b;font-weight:700;white-space:nowrap;-webkit-text-stroke:0.35px #22252b;">Unknown Patient</div>
<div style="position:absolute;left:719.5px;top:493.10px;height:16.80px;line-height:16.80px;font-size:14px;color:#5a5f68;font-weight:400;white-space:nowrap;-webkit-text-stroke:0.2px #5a5f68;">101B</div>
<div style="position:absolute;left:937px;top:492.80px;height:17.40px;line-height:17.40px;font-size:14.5px;color:#5a5f68;font-weight:400;white-space:nowrap;-webkit-text-stroke:0.2px #5a5f68;">3/26/2025</div>
<div style="position:absolute;left:1154px;top:482.90px;height:16.20px;line-height:16.20px;font-size:13.5px;color:#484c54;font-weight:700;white-space:nowrap;-webkit-text-stroke:0.35px #484c54;">General Maintenance</div>
<div style="position:absolute;left:1154px;top:506.00px;height:15.00px;line-height:15.00px;font-size:12.5px;color:#6a6e76;font-weight:400;white-space:nowrap;-webkit-text-stroke:0.2px #6a6e76;">Bed maintenance required</div>
<svg style="position:absolute;left:1530px;top:494px;" width="14" height="14" viewBox="0 0 24 24"><g fill="none" stroke="#a8acb2" stroke-width="2" stroke-linecap="round" stroke-linejoin="round"><path d="M20 6 9 17l-5-5"/></g></svg>
<svg style="position:absolute;left:1562px;top:495px;" width="4" height="13" viewBox="0 0 4 13"><circle cx="2" cy="2" r="1.1" fill="#a4a8ae"/><circle cx="2" cy="6.5" r="1.1" fill="#a4a8ae"/><circle cx="2" cy="11" r="1.1" fill="#a4a8ae"/></svg>
<div style="position:absolute;left:277px;top:536px;width:1304px;height:55px;background:#ecf3fb;border-radius:4px;box-shadow:0 0 3px #eef4fb"></div>
<div style="position:absolute;left:285px;top:554px;width:14px;height:14px;background:#fff;border:1.3px solid #7a7e86;border-radius:2.5px"></div>
<div style="position:absolute;left:393.5px;top:555.25px;height:16.50px;line-height:16.50px;font-size:13.75px;color:#22252b;font-weight:700;white-space:nowrap;-webkit-text-stroke:0.35px #22252b;">Hiliary Clinton</div>
<div style="position:absolute;left:719.5px;top:555.10px;height:16.80px;line-height:16.80px;font-size:14px;color:#5a5f68;font-weight:400;white-space:nowrap;-webkit-text-stroke:0.2px #5a5f68;">101A</div>
<div style="position:absolute;left:937px;top:554.80px;height:17.40px;line-height:17.40px;font-size:14.5px;color:#5a5f68;font-weight:400;white-space:nowrap;-webkit-text-stroke:0.2px #5a5f68;">3/26/2025</div>
<div style="position:absolute;left:1154px;top:544.90px;height:16.20px;line-height:16.20px;font-size:13.5px;color:#484c54;font-weight:700;white-space:nowrap;-webkit-text-stroke:0.35px #484c54;">General Maintenance</div>
<div style="position:absolute;left:1154px;top:568.00px;height:15.00px;line-height:15.00px;font-size:12.5px;color:#6a6e76;font-weight:400;white-space:nowrap;-webkit-text-stroke:0.2px #6a6e76;">Bed maintenance required</div>
<svg style="position:absolute;left:1530px;top:556px;" width="14" height="14" viewBox="0 0 24 24"><g fill="none" stroke="#a8acb2" stroke-width="2" stroke-linecap="round" stroke-linejoin="round"><path d="M20 6 9 17l-5-5"/></g></svg>
<svg style="position:absolute;left:1562px;top:557px;" width="4" height="13" viewBox="0 0 4 13"><circle cx="2" cy="2" r="1.1" fill="#a4a8ae"/><circle cx="2" cy="6.5" r="1.1" fill="#a4a8ae"/><circle cx="2" cy="11" r="1.1" fill="#a4a8ae"/></svg>
<div style="position:absolute;left:277px;top:598px;width:1304px;height:55px;background:#ecf3fb;border-radius:4px;box-shadow:0 0 3px #eef4fb"></div>
<div style="position:absolute;left:285px;top:616px;width:14px;height:14px;background:#fff;border:1.3px solid #7a7e86;border-radius:2.5px"></div>
<div style="position:absolute;left:393.5px;top:617.25px;height:16.50px;line-height:16.50px;font-size:13.75px;color:#22252b;font-weight:700;white-space:nowrap;-webkit-text-stroke:0.35px #22252b;">Unknown Patient</div>
<div style="position:absolute;left:719.5px;top:617.10px;height:16.80px;line-height:16.80px;font-size:14px;color:#5a5f68;font-weight:400;white-space:nowrap;-webkit-text-stroke:0.2px #5a5f68;">101A</div>
<div style="position:absolute;left:937px;top:616.80px;height:17.40px;line-height:17.40px;font-size:14.5px;color:#5a5f68;font-weight:400;white-space:nowrap;-webkit-text-stroke:0.2px #5a5f68;">3/18/2025</div>
<div style="position:absolute;left:1154px;top:606.90px;height:16.20px;line-height:16.20px;font-size:13.5px;color:#484c54;font-weight:700;white-space:nowrap;-webkit-text-stroke:0.35px #484c54;">General Maintenance</div>
<div style="position:absolute;left:1154px;top:630.00px;height:15.00px;line-height:15.00px;font-size:12.5px;color:#6a6e76;font-weight:400;white-space:nowrap;-webkit-text-stroke:0.2px #6a6e76;">Bed maintenance required</div>
<svg style="position:absolute;left:1530px;top:618px;" width="14" height="14" viewBox="0 0 24 24"><g fill="none" stroke="#a8acb2" stroke-width="2" stroke-linecap="round" stroke-linejoin="round"><path d="M20 6 9 17l-5-5"/></g></svg>
<svg style="position:absolute;left:1562px;top:619px;" width="4" height="13" viewBox="0 0 4 13"><circle cx="2" cy="2" r="1.1" fill="#a4a8ae"/><circle cx="2" cy="6.5" r="1.1" fill="#a4a8ae"/><circle cx="2" cy="11" r="1.1" fill="#a4a8ae"/></svg>
<div style="position:absolute;left:277px;top:660px;width:1304px;height:55px;background:#ecf3fb;border-radius:4px;box-shadow:0 0 3px #eef4fb"></div>
<div style="position:absolute;left:285px;top:678px;width:14px;height:14px;background:#fff;border:1.3px solid #7a7e86;border-radius:2.5px"></div>
<div style="position:absolute;left:393.5px;top:679.25px;height:16.50px;line-height:16.50px;font-size:13.75px;color:#22252b;font-weight:700;white-space:nowrap;-webkit-text-stroke:0.35px #22252b;">Hiliary Clinton</div>
<div style="position:absolute;left:719.5px;top:679.10px;height:16.80px;line-height:16.80px;font-size:14px;color:#5a5f68;font-weight:400;white-space:nowrap;-webkit-text-stroke:0.2px #5a5f68;">101A</div>
<div style="position:absolute;left:937px;top:678.80px;height:17.40px;line-height:17.40px;font-size:14.5px;color:#5a5f68;font-weight:400;white-space:nowrap;-webkit-text-stroke:0.2px #5a5f68;">3/18/2025</div>
<div style="position:absolute;left:1154px;top:668.90px;height:16.20px;line-height:16.20px;font-size:13.5px;color:#484c54;font-weight:700;white-space:nowrap;-webkit-text-stroke:0.35px #484c54;">General Maintenance</div>
<div style="position:absolute;left:1154px;top:692.00px;height:15.00px;line-height:15.00px;font-size:12.5px;color:#6a6e76;font-weight:400;white-space:nowrap;-webkit-text-stroke:0.2px #6a6e76;">Bed maintenance required</div>
<svg style="position:absolute;left:1530px;top:680px;" width="14" height="14" viewBox="0 0 24 24"><g fill="none" stroke="#a8acb2" stroke-width="2" stroke-linecap="round" stroke-linejoin="round"><path d="M20 6 9 17l-5-5"/></g></svg>
<svg style="position:absolute;left:1562px;top:681px;" width="4" height="13" viewBox="0 0 4 13"><circle cx="2" cy="2" r="1.1" fill="#a4a8ae"/><circle cx="2" cy="6.5" r="1.1" fill="#a4a8ae"/><circle cx="2" cy="11" r="1.1" fill="#a4a8ae"/></svg>
<div style="position:absolute;left:277px;top:722px;width:1304px;height:55px;background:#ecf3fb;border-radius:4px;box-shadow:0 0 3px #eef4fb"></div>
<div style="position:absolute;left:285px;top:740px;width:14px;height:14px;background:#fff;border:1.3px solid #7a7e86;border-radius:2.5px"></div>
<div style="position:absolute;left:393.5px;top:741.25px;height:16.50px;line-height:16.50px;font-size:13.75px;color:#22252b;font-weight:700;white-space:nowrap;-webkit-text-stroke:0.35px #22252b;">Chuck Schumer</div>
<div style="position:absolute;left:719.5px;top:741.10px;height:16.80px;line-height:16.80px;font-size:14px;color:#5a5f68;font-weight:400;white-space:nowrap;-webkit-text-stroke:0.2px #5a5f68;">105A</div>
<div style="position:absolute;left:937px;top:740.80px;height:17.40px;line-height:17.40px;font-size:14.5px;color:#5a5f68;font-weight:400;white-space:nowrap;-webkit-text-stroke:0.2px #5a5f68;">3/11/2025</div>
<div style="position:absolute;left:1154px;top:730.90px;height:16.20px;line-height:16.20px;font-size:13.5px;color:#484c54;font-weight:700;white-space:nowrap;-webkit-text-stroke:0.35px #484c54;">General Maintenance</div>
<div style="position:absolute;left:1154px;top:754.00px;height:15.00px;line-height:15.00px;font-size:12.5px;color:#6a6e76;font-weight:400;white-space:nowrap;-webkit-text-stroke:0.2px #6a6e76;">Bed maintenance required</div>
<svg style="position:absolute;left:1530px;top:742px;" width="14" height="14" viewBox="0 0 24 24"><g fill="none" stroke="#a8acb2" stroke-width="2" stroke-linecap="round" stroke-linejoin="round"><path d="M20 6 9 17l-5-5"/></g></svg>
<svg style="position:absolute;left:1562px;top:743px;" width="4" height="13" viewBox="0 0 4 13"><circle cx="2" cy="2" r="1.1" fill="#a4a8ae"/><circle cx="2" cy="6.5" r="1.1" fill="#a4a8ae"/><circle cx="2" cy="11" r="1.1" fill="#a4a8ae"/></svg>
<div style="position:absolute;left:277px;top:784px;width:1304px;height:55px;background:#ecf3fb;border-radius:4px;box-shadow:0 0 3px #eef4fb"></div>
<div style="position:absolute;left:285px;top:802px;width:14px;height:14px;background:#fff;border:1.3px solid #7a7e86;border-radius:2.5px"></div>
<div style="position:absolute;left:393.5px;top:803.25px;height:16.50px;line-height:16.50px;font-size:13.75px;color:#22252b;font-weight:700;white-space:nowrap;-webkit-text-stroke:0.35px #22252b;">Unknown Patient</div>
<div style="position:absolute;left:719.5px;top:803.10px;height:16.80px;line-height:16.80px;font-size:14px;color:#5a5f68;font-weight:400;white-space:nowrap;-webkit-text-stroke:0.2px #5a5f68;">125B</div>
<div style="position:absolute;left:937px;top:802.80px;height:17.40px;line-height:17.40px;font-size:14.5px;color:#5a5f68;font-weight:400;white-space:nowrap;-webkit-text-stroke:0.2px #5a5f68;">3/10/2025</div>
<div style="position:absolute;left:1154px;top:792.90px;height:16.20px;line-height:16.20px;font-size:13.5px;color:#484c54;font-weight:700;white-space:nowrap;-webkit-text-stroke:0.35px #484c54;">General Maintenance</div>
<div style="position:absolute;left:1154px;top:816.00px;height:15.00px;line-height:15.00px;font-size:12.5px;color:#6a6e76;font-weight:400;white-space:nowrap;-webkit-text-stroke:0.2px #6a6e76;">Bed maintenance required</div>
<svg style="position:absolute;left:1530px;top:804px;" width="14" height="14" viewBox="0 0 24 24"><g fill="none" stroke="#a8acb2" stroke-width="2" stroke-linecap="round" stroke-linejoin="round"><path d="M20 6 9 17l-5-5"/></g></svg>
<svg style="position:absolute;left:1562px;top:805px;" width="4" height="13" viewBox="0 0 4 13"><circle cx="2" cy="2" r="1.1" fill="#a4a8ae"/><circle cx="2" cy="6.5" r="1.1" fill="#a4a8ae"/><circle cx="2" cy="11" r="1.1" fill="#a4a8ae"/></svg>
<div style="position:absolute;left:1647px;top:119px;width:5px;height:768px;background:#f8f9fa"></div>
<div style="position:absolute;left:1639px;top:139px;width:8px;height:711px;background:#8a8a8c;border-radius:4px"></div>
<svg style="position:absolute;left:1638px;top:126px;" width="10" height="7" viewBox="0 0 10 7"><path d="M5 0.5 9.5 6.5H0.5z" fill="#8a8a8c"/></svg>
<svg style="position:absolute;left:1638px;top:872px;" width="10" height="7" viewBox="0 0 10 7"><path d="M5 6.5 9.5 0.5H0.5z" fill="#8a8a8c"/></svg>
<div style="position:absolute;left:0px;top:886px;width:1652px;height:3px;background:#e2e2e2"></div>
<svg style="position:absolute;left:1119px;top:144px;" width="14" height="20" viewBox="0 0 14 20"><path d="M1.5 1.5v14l3.6-3.3 2.4 5.4 2.2-1-2.4-5.3h4.9z" fill="#fff" stroke="#333" stroke-width="1.1" stroke-linejoin="round"/></svg>
<div style="position:absolute;left:0px;top:889px;width:1652px;height:41px;background:#202020"></div>
<svg style="position:absolute;left:16px;top:893px;" width="24" height="26" viewBox="0 0 24 26"><circle cx="10" cy="15" r="8.5" fill="#f59a1a"/><circle cx="10" cy="15" r="6" fill="#f8b62a"/><circle cx="16" cy="7" r="6" fill="#c8322a"/><text x="16" y="10" font-size="9" font-family="Liberation Sans" fill="#fff" text-anchor="middle" font-weight="700">4</text></svg>
<div style="position:absolute;left:42.5px;top:897.00px;height:12.00px;line-height:12.00px;font-size:10px;color:#f2f2f2;font-weight:400;white-space:nowrap;-webkit-text-stroke:0.2px #f2f2f2;">94&deg;F</div>
<div style="position:absolute;left:42.5px;top:911.00px;height:12.00px;line-height:12.00px;font-size:10px;color:#c8c8c8;font-weight:400;white-space:nowrap;-webkit-text-stroke:0.2px #c8c8c8;">Sunny</div>
<svg style="position:absolute;left:530px;top:899px;" width="21" height="21" viewBox="0 0 21 21"><rect x="0" y="0" width="9.8" height="9.8" fill="#3a9ef0"/><rect x="11" y="0" width="9.8" height="9.8" fill="#4aa8f2"/><rect x="0" y="11" width="9.8" height="9.8" fill="#2f8fe6"/><rect x="11" y="11" width="9.8" height="9.8" fill="#3b9cf0"/></svg>
<div style="position:absolute;left:563px;top:897px;width:187px;height:25px;background:#f1f1f0;border-radius:13px"></div>
<svg style="position:absolute;left:571px;top:902px;" width="15" height="15" viewBox="0 0 15 15"><circle cx="6" cy="6" r="4.6" fill="none" stroke="#222" stroke-width="1.6"/><path d="M9.5 9.5 13.5 13.5" stroke="#222" stroke-width="1.8"/></svg>
<div style="position:absolute;left:593px;top:903.25px;height:13.50px;line-height:13.50px;font-size:11.25px;color:#7a7a7a;font-weight:400;white-space:nowrap;-webkit-text-stroke:0.2px #7a7a7a;">Search the web</div>
<svg style="position:absolute;left:711px;top:898px;" width="36" height="23" viewBox="0 0 36 23"><path d="M2 20 C10 12 20 6 34 2" stroke="#b9a86a" stroke-width="1.5" fill="none"/><ellipse cx="9" cy="14" rx="4" ry="2.5" fill="#e0d48a" transform="rotate(-30 9 14)"/><ellipse cx="16" cy="9" rx="4" ry="2.5" fill="#d8c870" transform="rotate(-40 16 9)"/><ellipse cx="24" cy="13" rx="5" ry="3.5" fill="#e8dc98"/><ellipse cx="29" cy="7" rx="3.5" ry="2.5" fill="#d0c060"/><ellipse cx="20" cy="17" rx="3.5" ry="2.2" fill="#c8b860"/></svg>
<svg style="position:absolute;left:762px;top:900px;" width="22" height="18" viewBox="0 0 22 18"><rect x="0.5" y="5.5" width="13" height="11" rx="1.5" fill="#6a6a6a"/><rect x="6" y="0.5" width="14" height="11" rx="1.5" fill="#e8e8e8"/></svg>
<div style="position:absolute;left:800px;top:899px;width:20px;height:20px;border-radius:42% 48% 45% 40%;background:conic-gradient(from 0deg,#3a6ad8,#9a5ad0 15%,#e06a9a 35%,#f58a5a 50%,#d8b840 62%,#5ab078 75%,#1a8ad4 88%,#3a6ad8);transform:rotate(-8deg)"></div>
<div style="position:absolute;left:808px;top:903px;width:3px;height:12px;background:rgba(30,30,30,.6);border-radius:2px;transform:rotate(25deg)"></div>
<div style="position:absolute;left:831px;top:890px;width:33px;height:37px;background:#2e2e2f;border-radius:4px"></div>
<svg style="position:absolute;left:837px;top:899px;" width="21" height="21" viewBox="0 0 21 21"><defs><linearGradient id="eg" x1="0" y1="0" x2="1" y2="1"><stop offset="0" stop-color="#34c8f0"/><stop offset="1" stop-color="#1a62c8"/></linearGradient></defs><circle cx="10.5" cy="10.5" r="10" fill="url(#eg)"/><path d="M4 12c0-4 3-6.5 6.8-6.5 3.5 0 6 2.2 6 5H8.5c.2 2.5 2.5 4.2 5.5 4.2 1.5 0 2.5-.3 3.5-.8-1.3 2.5-4 4-7 4C6.8 18 4 15.5 4 12z" fill="#e6f6ff" opacity=".85"/><path d="M8.5 10.6h8.3" stroke="#1a62c8" stroke-width="1"/></svg>
<div style="position:absolute;left:842px;top:924px;width:11px;height:2px;background:#5fb8f5;border-radius:1px"></div>
<svg style="position:absolute;left:875px;top:900px;" width="22" height="19" viewBox="0 0 22 19"><path d="M1 3a1.5 1.5 0 0 1 1.5-1.5H8l2 2h9a1.5 1.5 0 0 1 1.5 1.5v12a1.5 1.5 0 0 1-1.5 1.5h-16A1.5 1.5 0 0 1 1 17z" fill="#f5c040"/><path d="M1 7h19.5v10a1.5 1.5 0 0 1-1.5 1.5H2.5A1.5 1.5 0 0 1 1 17z" fill="#fbd560"/><rect x="5" y="11" width="12" height="6" fill="#2a7cd8"/></svg>
<svg style="position:absolute;left:913px;top:899px;" width="21" height="21" viewBox="0 0 21 21"><rect x="0" y="0" width="21" height="21" rx="2" fill="#1e88e0"/><path d="M3 12h4l2-4 2.5 7 2-5h4.5" stroke="#fff" stroke-width="1.4" fill="none"/></svg>
<svg style="position:absolute;left:951px;top:899px;" width="20" height="21" viewBox="0 0 20 21"><rect x="1" y="5" width="18" height="15" rx="2" fill="#f2f2f2"/><path d="M6 5V3.5a4 4 0 0 1 8 0V5" stroke="#e8e8e8" stroke-width="1.6" fill="none"/><rect x="6" y="9" width="3.5" height="3.5" fill="#f25022"/><rect x="10.5" y="9" width="3.5" height="3.5" fill="#7fba00"/><rect x="6" y="13.5" width="3.5" height="3.5" fill="#00a4ef"/><rect x="10.5" y="13.5" width="3.5" height="3.5" fill="#ffb900"/></svg>
<svg style="position:absolute;left:988px;top:896px;" width="24" height="24" viewBox="0 0 24 24"><circle cx="11" cy="13" r="10" fill="#2a8ae8"/><circle cx="11" cy="13" r="7.5" fill="none" stroke="#8cc8f8" stroke-width="1"/><text x="11" y="18" font-size="13" font-family="Liberation Sans" fill="#fff" text-anchor="middle" font-weight="700">?</text><circle cx="18" cy="5" r="4.5" fill="#f5b820"/></svg>
<svg style="position:absolute;left:1027px;top:899px;" width="19" height="21" viewBox="0 0 19 21"><path d="M2 3l7.5-2.5L17 3v9c0 4-3.5 7-7.5 8.5C5.5 19 2 16 2 12z" fill="#b0221e"/><path d="M5 14V6l4.5 3 4.5-3v8" stroke="#1e1e1f" stroke-width="2" fill="none"/></svg>
<svg style="position:absolute;left:1064px;top:899px;" width="21" height="21" viewBox="0 0 21 21"><rect x="0" y="0" width="21" height="21" rx="2" fill="#21a060"/><path d="M10.5 3v15M4 8h13" stroke="#fff" stroke-width="2.2"/></svg>
<div style="position:absolute;left:1072px;top:925px;width:5px;height:2px;background:#9a9a9a;border-radius:1px"></div>
<svg style="position:absolute;left:1102px;top:899px;" width="21" height="21" viewBox="0 0 21 21"><circle cx="10.5" cy="10.5" r="9" fill="#8a96a8"/><circle cx="10.5" cy="10.5" r="6.5" fill="#5b6b82"/><circle cx="10.5" cy="10.5" r="3.2" fill="#e8eef6"/><g stroke="#8a96a8" stroke-width="3"><path d="M10.5 0v3M10.5 18v3M0 10.5h3M18 10.5h3M3 3l2 2M16 16l2 2M3 18l2-2M16 5l2-2"/></g></svg>
<div style="position:absolute;left:1110px;top:925px;width:5px;height:2px;background:#9a9a9a;border-radius:1px"></div>
<svg style="position:absolute;left:1469px;top:905px;" width="13" height="8" viewBox="0 0 13 8"><path d="M1 7 6.5 1.5 12 7" stroke="#e8e8e8" stroke-width="1.4" fill="none"/></svg>
<svg style="position:absolute;left:1498px;top:901px;" width="11" height="17" viewBox="0 0 11 17"><rect x="3" y="1" width="5" height="10" rx="2.5" fill="none" stroke="#8fa0b0" stroke-width="1.2"/><path d="M1 8a4.5 4.5 0 0 0 9 0M5.5 12.5v3" stroke="#8fa0b0" stroke-width="1.2" fill="none"/></svg>
<svg style="position:absolute;left:1525px;top:905px;" width="14" height="11" viewBox="0 0 14 11"><path d="M1 4.5a10 10 0 0 1 14 0M3.2 7a7 7 0 0 1 9.6 0M5.5 9.3a3.5 3.5 0 0 1 5 0" stroke="#e8e8e8" stroke-width="1.2" fill="none"/><circle cx="8" cy="11" r="1" fill="#e8e8e8"/></svg>
<svg style="position:absolute;left:1543px;top:902px;" width="18" height="15" viewBox="0 0 18 15"><path d="M1 5.5h3l4-4v12l-4-4H1z" fill="none" stroke="#e8e8e8" stroke-width="1.2"/><path d="M11 4.5a4 4 0 0 1 0 6M13.5 2.5a7 7 0 0 1 0 10" stroke="#e8e8e8" stroke-width="1.2" fill="none"/></svg>
<svg style="position:absolute;left:1564px;top:904px;" width="16" height="11" viewBox="0 0 16 11"><rect x="0.6" y="1.6" width="14" height="8" rx="1.2" fill="none" stroke="#e8e8e8" stroke-width="1.2"/><rect x="2.3" y="3.3" width="10.5" height="4.6" fill="#e8e8e8"/><rect x="15.2" y="4" width="1.8" height="3.2" fill="#e8e8e8"/></svg>
<div style="position:absolute;left:1593.5px;top:896.15px;height:11.70px;line-height:11.70px;font-size:9.75px;color:#f0f0f0;font-weight:400;white-space:nowrap;-webkit-text-stroke:0.2px #f0f0f0;letter-spacing:0px">12:47 PM</div>
<div style="position:absolute;left:1594px;top:910.15px;height:11.70px;line-height:11.70px;font-size:9.75px;color:#e8e8e8;font-weight:400;white-space:nowrap;-webkit-text-stroke:0.2px #e8e8e8;letter-spacing:0.5px">7/8/2025</div>
</div>
<svg style="position:absolute;left:1508px;top:996px" width="54" height="54" viewBox="0 0 54 54"><defs><linearGradient id="pg" x1="0" y1="0.2" x2="1" y2="0.5"><stop offset="0" stop-color="#1f9aa0"/><stop offset="1" stop-color="#7acc5a"/></linearGradient></defs><path d="M4.5 50.5V27a22.5 22.5 0 1 1 22.5 23.5z" fill="url(#pg)"/><circle cx="27" cy="27" r="14.5" fill="none" stroke="#e6fff2" stroke-width="2.8"/><circle cx="27" cy="27" r="8.5" fill="#f4fff8"/></svg>
<svg style="position:absolute;left:1560px;top:980px" width="360" height="80" viewBox="0 0 360 80"><text transform="translate(22.5,52.5) scale(1.09,1)" font-family="Liberation Sans" font-weight="700" font-size="46" fill="#fff" stroke="#fff" stroke-width="1.3" stroke-linejoin="round">p</text><text transform="translate(51.0,52.5) scale(1.09,1)" font-family="Liberation Sans" font-weight="700" font-size="46" fill="#fff" stroke="#fff" stroke-width="1.3" stroke-linejoin="round">o</text><text transform="translate(82.5,52.5) scale(1.09,1)" font-family="Liberation Sans" font-weight="700" font-size="46" fill="#fff" stroke="#fff" stroke-width="1.3" stroke-linejoin="round">&#305;</text><text transform="translate(95.5,52.5) scale(1.09,1)" font-family="Liberation Sans" font-weight="700" font-size="46" fill="#fff" stroke="#fff" stroke-width="1.3" stroke-linejoin="round">n</text><text transform="translate(122.5,52.5) scale(1.09,1)" font-family="Liberation Sans" font-weight="700" font-size="46" fill="#fff" stroke="#fff" stroke-width="1.3" stroke-linejoin="round">d</text><text transform="translate(154.0,52.5) scale(1.09,1)" font-family="Liberation Sans" font-weight="700" font-size="46" fill="#fff" stroke="#fff" stroke-width="1.3" stroke-linejoin="round">e</text><text transform="translate(183.5,52.5) scale(1.09,1)" font-family="Liberation Sans" font-weight="700" font-size="46" fill="#fff" stroke="#fff" stroke-width="1.3" stroke-linejoin="round">o</text><text transform="translate(225.0,52.5) scale(1.09,1)" font-family="Liberation Sans" font-weight="700" font-size="46" fill="#fff" stroke="#fff" stroke-width="1.3" stroke-linejoin="round">c</text><text transform="translate(252.0,52.5) scale(1.09,1)" font-family="Liberation Sans" font-weight="700" font-size="46" fill="#fff" stroke="#fff" stroke-width="1.3" stroke-linejoin="round">o</text><text transform="translate(283.5,52.5) scale(1.09,1)" font-family="Liberation Sans" font-weight="700" font-size="46" fill="#fff" stroke="#fff" stroke-width="1.3" stroke-linejoin="round">m</text><circle cx="89.5" cy="20" r="4.8" fill="#fff"/><circle cx="218.5" cy="48" r="4.8" fill="#fff"/></svg>
</body></html>
